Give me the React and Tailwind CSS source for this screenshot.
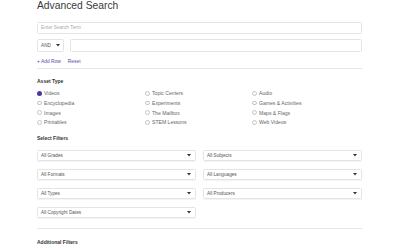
import React from 'react';

const ASSETS = [
  'Videos', 'Encyclopedia', 'Images', 'Printables',
  'Topic Centers', 'Experiments', 'The Mailbox', 'STEM Lessons',
  'Audio', 'Games & Activities', 'Maps & Flags', 'Web Videos',
];

const FILTERS = [
  'All Grades', 'All Subjects',
  'All Formats', 'All Languages',
  'All Types', 'All Producers',
  'All Copyright Dates',
];

const Caret = () => (
  <svg width="4" height="3" viewBox="0 0 4 3" className="shrink-0">
    <polygon points="0,0 4,0 2,2.6" fill="#333" />
  </svg>
);

function Radio({ label, checked }) {
  return (
    <div className="flex items-center gap-[2.5px] h-[9.7px]">
      {checked ? (
        <span className="w-[4.5px] h-[4.5px] rounded-full bg-[#4b3a9c]" />
      ) : (
        <span className="w-[4.5px] h-[4.5px] rounded-full border border-[#c4c4c4] box-border" />
      )}
      <span className="text-[5.1px] leading-[8px] text-[#666]">{label}</span>
    </div>
  );
}

function Select({ label }) {
  return (
    <div className="h-[11px] border border-[#e4e4e4] rounded-[1.5px] flex items-center justify-between pl-[3px] pr-[4px] shadow-[0_0.5px_1px_rgba(0,0,0,0.05)]">
      <span className="text-[4.7px] text-[#555]">{label}</span>
      <Caret />
    </div>
  );
}

export default function App() {
  return (
    <div className="w-[400px] h-[250px] overflow-hidden bg-white font-['Liberation_Sans',Arial,sans-serif]">
      <div className="ml-[37px] w-[325px]">
        <h1 className="h-[12px] leading-[12px] text-[10.3px] text-[#3a3a3a]">Advanced Search</h1>

        <div className="mt-[10px] h-[12px] border border-[#e4e4e4] rounded-[1.5px] flex items-center pl-[3px] text-[4.8px] text-[#aaa]">
          Enter Search Term
        </div>

        <div className="mt-[5px] h-[13px] flex gap-[6px]">
          <div className="w-[27px] border border-[#e4e4e4] rounded-[1.5px] flex items-center justify-between px-[3px]">
            <span className="text-[4.7px] text-[#555]">AND</span>
            <Caret />
          </div>
          <div className="flex-1 border border-[#e4e4e4] rounded-[1.5px]" />
        </div>

        <div className="mt-[6px] h-[8px] flex items-center gap-[7px] text-[4.9px] text-[#5a4aa8]">
          <span>+ Add Row</span>
          <span>Reset</span>
        </div>

        <div className="mt-[2px] border-t border-[#e6e6e6]" />

        <h2 className="mt-[8px] h-[8px] leading-[8px] text-[5px] font-bold text-[#333]">Asset Type</h2>

        <div className="mt-[3.5px] grid grid-cols-[108px_107px_1fr] grid-rows-4 grid-flow-col">
          {ASSETS.map((a, i) => (
            <Radio key={a} label={a} checked={i === 0} />
          ))}
        </div>

        <h2 className="mt-[7px] h-[8px] leading-[8px] text-[5px] font-bold text-[#333]">Select Filters</h2>

        <div className="mt-[8px] grid grid-cols-2 gap-x-[7px] gap-y-[8px]">
          {FILTERS.map((f) => (
            <Select key={f} label={f} />
          ))}
        </div>

        <div className="mt-[10px] border-t border-[#e6e6e6]" />

        <h2 className="mt-[9px] h-[8px] leading-[8px] text-[5px] font-bold text-[#333]">Additional Filters</h2>
      </div>
    </div>
  );
}
